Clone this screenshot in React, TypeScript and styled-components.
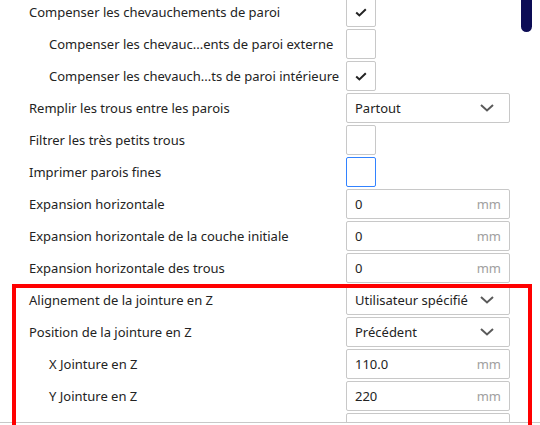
import styled, { createGlobalStyle } from 'styled-components'

const GlobalStyle = createGlobalStyle`
  html, body {
    margin: 0;
    padding: 0;
    background: #ffffff;
  }
  body {
    font-family: 'Noto Sans', 'Open Sans', sans-serif;
    color: #232323;
  }
`

const Page = styled.div`
  position: relative;
  width: 540px;
  height: 425px;
  overflow: hidden;
  background: #ffffff;
`

const ScrollArea = styled.div`
  display: flex;
  flex-direction: row;
  height: 422px;
  overflow: hidden;
  border-bottom: 1px solid #c8c8c8;
`

const SettingList = styled.div`
  flex: 1;
  display: flex;
  flex-direction: column;
  gap: 2px;
  margin-top: -3px;
`

const Row = styled.div`
  display: flex;
  flex-direction: row;
  align-items: center;
  height: 30px;
  flex: none;
`

const Label = styled.div<{ $indent?: boolean }>`
  width: ${(p) => (p.$indent ? 297 : 317)}px;
  padding-left: ${(p) => (p.$indent ? 49 : 29)}px;
  font-size: 13px;
  white-space: nowrap;
  color: #232323;
`

const CheckBox = styled.div<{ $focus?: boolean }>`
  box-sizing: border-box;
  width: 30px;
  height: 30px;
  border: 1px solid ${(p) => (p.$focus ? '#3282ff' : '#c8c8c8')};
  border-radius: 2px;
  display: flex;
  align-items: center;
  justify-content: center;
`

const Field = styled.div`
  box-sizing: border-box;
  width: 164px;
  height: 30px;
  border: 1px solid #c8c8c8;
  border-radius: 2px;
  display: flex;
  flex-direction: row;
  align-items: center;
  justify-content: space-between;
  padding: 0 8px;
  font-size: 13px;
  color: #232323;
`

const Unit = styled.span`
  color: #a0a0a0;
  font-size: 13px;
`

const Chevron = styled.svg`
  margin-right: 7px;
`

const Track = styled.div`
  width: 11px;
  margin-right: 8px;
  flex: none;
`

const Handle = styled.div`
  width: 11px;
  height: 32px;
  background: #0c0c55;
  border-radius: 0 0 6px 6px;
`

const Highlight = styled.div`
  position: absolute;
  left: 12px;
  top: 284px;
  width: 520px;
  height: 145px;
  box-sizing: border-box;
  border: 4px solid #ff0000;
  pointer-events: none;
`

function Check() {
  return (
    <svg width="12" height="9" viewBox="0 0 12 9">
      <path d="M1.2 4.4 L4.4 7.4 L10.8 1.2" fill="none" stroke="#232323" strokeWidth="2" />
    </svg>
  )
}

function Select(props: { value: string }) {
  return (
    <Field>
      <span>{props.value}</span>
      <Chevron width="14" height="8" viewBox="0 0 14 8">
        <path d="M1 1 L7 6.5 L13 1" fill="none" stroke="#5a5a5a" strokeWidth="2" />
      </Chevron>
    </Field>
  )
}

function NumberInput(props: { value: string }) {
  return (
    <Field>
      <span>{props.value}</span>
      <Unit>mm</Unit>
    </Field>
  )
}

type Setting = {
  label: string
  indent?: boolean
  kind: 'check' | 'select' | 'number' | 'empty'
  value?: string
  checked?: boolean
  focus?: boolean
}

const settings: Setting[] = [
  { label: 'Compenser les chevauchements de paroi', kind: 'check', checked: true },
  { label: 'Compenser les chevauc...ents de paroi externe', indent: true, kind: 'check' },
  { label: 'Compenser les chevauch...ts de paroi intérieure', indent: true, kind: 'check', checked: true },
  { label: 'Remplir les trous entre les parois', kind: 'select', value: 'Partout' },
  { label: 'Filtrer les très petits trous', kind: 'check' },
  { label: 'Imprimer parois fines', kind: 'check', focus: true },
  { label: 'Expansion horizontale', kind: 'number', value: '0' },
  { label: 'Expansion horizontale de la couche initiale', kind: 'number', value: '0' },
  { label: 'Expansion horizontale des trous', kind: 'number', value: '0' },
  { label: 'Alignement de la jointure en Z', kind: 'select', value: 'Utilisateur spécifié' },
  { label: 'Position de la jointure en Z', kind: 'select', value: 'Précédent' },
  { label: 'X Jointure en Z', indent: true, kind: 'number', value: '110.0' },
  { label: 'Y Jointure en Z', indent: true, kind: 'number', value: '220' },
  { label: '', kind: 'empty' },
]

export default function App() {
  return (
    <Page>
      <GlobalStyle />
      <ScrollArea>
        <SettingList>
          {settings.map((s, i) => (
            <Row key={i}>
              <Label $indent={s.indent}>{s.label}</Label>
              {s.kind === 'check' && <CheckBox $focus={s.focus}>{s.checked && <Check />}</CheckBox>}
              {s.kind === 'select' && <Select value={s.value ?? ''} />}
              {s.kind === 'number' && <NumberInput value={s.value ?? ''} />}
              {s.kind === 'empty' && <Field />}
            </Row>
          ))}
        </SettingList>
        <Track>
          <Handle />
        </Track>
      </ScrollArea>
      <Highlight />
    </Page>
  )
}
